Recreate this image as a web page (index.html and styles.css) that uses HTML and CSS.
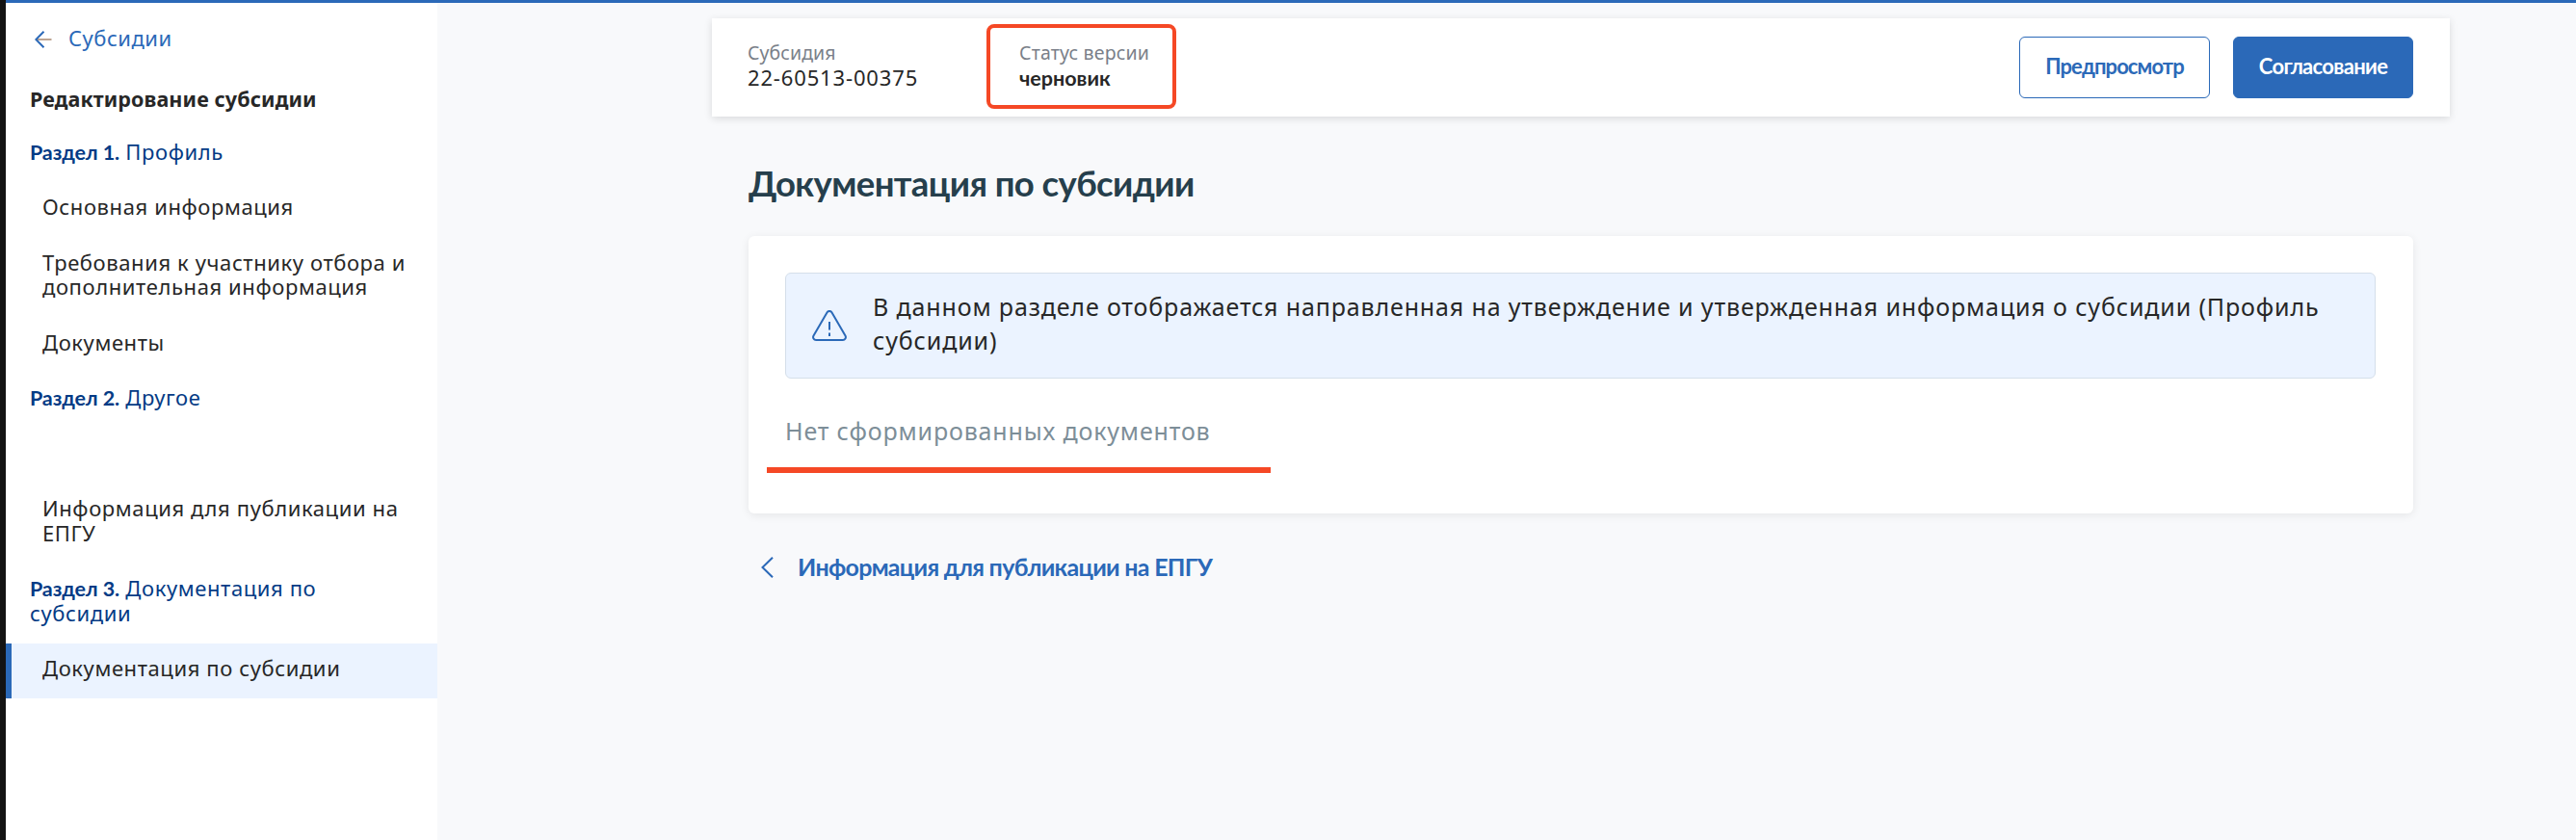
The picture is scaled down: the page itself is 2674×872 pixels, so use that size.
FILE: index.html
```html
<!DOCTYPE html>
<html lang="ru">
<head>
<meta charset="utf-8">
<title>Документация по субсидии</title>
<link rel="stylesheet" href="styles.css">
</head>
<body>
<div class="app">
  <aside class="sidebar">
    <a class="back">
      <svg class="back-icon" width="18" height="18" viewBox="0 0 18 18" fill="none"><path d="M2 9h15.500" stroke="#ae8e78" stroke-width="1.600"/><path d="M9.500 .8 1.300 9l8.200 8.200" stroke="#2b69b8" stroke-width="2"/></svg>
      <span class="back-text">Субсидии</span>
    </a>
    <h2 class="side-title">Редактирование субсидии</h2>
    <nav class="menu">
      <div class="section"><b class="num">Раздел 1.</b> Профиль</div>
      <a class="item">Основная информация</a>
      <a class="item">Требования к участнику отбора и<br>дополнительная информация</a>
      <a class="item">Документы</a>
      <div class="section"><b class="num">Раздел 2.</b> Другое</div>
      <div class="blank"></div>
      <a class="item">Информация для публикации на<br>ЕПГУ</a>
      <div class="section"><b class="num">Раздел 3.</b> Документация по<br>субсидии</div>
      <a class="item active">Документация по субсидии</a>
    </nav>
  </aside>
  <main class="main">
    <header class="topbar">
      <div class="field subsidy"><span class="label">Субсидия</span><span class="number">22-60513-00375</span></div>
      <div class="field status"><span class="label status-label">Статус версии</span><b class="state">черновик</b></div>
      <div class="actions">
        <button class="btn outline">Предпросмотр</button>
        <button class="btn primary">Согласование</button>
      </div>
    </header>
    <div class="content">
      <h1 class="title">Документация по субсидии</h1>
      <section class="card">
        <div class="alert">
          <svg class="alert-icon" width="36" height="33" viewBox="0 0 36 33" fill="none" stroke="#2b69b8" stroke-width="2" stroke-linejoin="round"><path d="M15.600 2.300 1.500 26.500a3 3 0 0 0 2.600 4.500h27.800a3 3 0 0 0 2.600-4.500L20.400 2.300a2.800 2.800 0 0 0-4.800 0Z"/><path d="M18 12v8.500M18 23.500v3.500"/></svg>
          <p class="alert-text">В данном разделе отображается направленная на утверждение и утвержденная информация о субсидии (Профиль<br>субсидии)</p>
        </div>
        <p class="empty">Нет сформированных документов</p>
        <div class="underline"></div>
      </section>
      <a class="prev">
        <svg class="prev-icon" width="13" height="22" viewBox="0 0 13 22" fill="none" stroke="#2b69b8" stroke-width="2"><path d="M12 .7 1.500 11 12 21.300"/></svg>
        <span class="prev-text">Информация для публикации на ЕПГУ</span>
      </a>
    </div>
  </main>
</div>
</body>
</html>
```
FILE: styles.css
```css
* { box-sizing: border-box; }
body {
  margin: 0;
  background: #f8f9fb;
  color: #272727;
  font: 22px/25.5px "Noto Sans", "Liberation Sans", sans-serif;
}
h1, h2, p { margin: 0; }
.app {
  display: flex;
  height: 872px;
  overflow: hidden;
  border-left: 6px solid #131313;
}

/* Sidebar */
.sidebar {
  width: 448px;
  background: #fff;
  border-top: 3px solid #2b69b8;
  letter-spacing: .6px;
}
.back {
  display: flex;
  align-items: center;
  gap: 17px;
  padding: 24px 0 0 30px;
  color: #2b69b8;
}
.back-text { letter-spacing: .5px; }
.back-icon { margin-top: 2px; }
.side-title {
  padding: 37px 0 0 25px;
  font-size: 21.5px;
  line-height: 25.5px;
  letter-spacing: .1px;
}
.menu { padding-top: 16px; }
.section, .item { padding: 13.5px 0 18.5px; white-space: nowrap; }
.section { padding-left: 25px; color: #043b85; }
.num {
  font-family: Lato, sans-serif;
  font-size: 21.5px;
  font-weight: 700;
  line-height: 1;
  letter-spacing: -.12px;
}
.item { display: block; padding-left: 38px; }
.active {
  padding-left: 32px;
  border-left: 6px solid #2b69b8;
  background: #ebf3ff;
}
.blank { height: 57.5px; }

/* Main column */
.main { flex: 1; border-top: 3px solid #2b69b8; }
.topbar {
  display: flex;
  align-items: flex-start;
  width: 1804px;
  height: 102px;
  margin: 16px 0 0 285px;
  padding-right: 38px;
  background: #fff;
  box-shadow: 0 2px 8px rgba(0, 0, 0, .13);
}
.field { display: flex; flex-direction: column; }
.subsidy { width: 285px; padding: 23px 0 0 37px; }
.label { font-size: 19.5px; line-height: 26px; letter-spacing: .08px; color: #7a7f89; }
.number { line-height: 25px; letter-spacing: .85px; }
.status {
  width: 197px;
  height: 88px;
  margin-top: 6px;
  padding: 13px 0 0 30px;
  border: 4px solid #f54825;
  border-radius: 8px;
}
.status-label { letter-spacing: .18px; }
.state {
  font-family: Lato, sans-serif;
  font-size: 21.5px;
  font-weight: 700;
  line-height: 26px;
}
.actions { display: flex; gap: 24px; margin: 19px 0 0 auto; }
.btn {
  height: 64px;
  padding: 0 0 2px;
  border: 1px solid #2b69b8;
  border-radius: 6px;
  font: 700 22px/26px Lato, sans-serif;
}
.outline { width: 198px; background: #fff; color: #2b69b8; letter-spacing: -.9px; }
.primary { width: 187px; background: #2b69b8; color: #fff; letter-spacing: -.68px; }

/* Content */
.content { width: 1728px; margin: 44px 0 0 323px; }
.title {
  font: 700 36.5px/50px Lato, sans-serif;
  letter-spacing: -.6px;
  color: #263f4c;
}
.card {
  height: 288px;
  margin-top: 30px;
  padding: 38px;
  border-radius: 6px;
  background: #fff;
  box-shadow: 0 2px 10px rgba(0, 0, 0, .08);
}
.alert {
  display: flex;
  align-items: center;
  width: 1651px;
  height: 110px;
  padding: 0 0 0 27px;
  border: 1px solid #d5dfea;
  border-radius: 6px;
  background: #ebf3ff;
}
.alert-text {
  margin: -5px 0 0 27px;
  font-size: 25px;
  line-height: 35px;
  letter-spacing: .86px;
  white-space: nowrap;
}
.empty {
  margin-top: 37px;
  font-size: 25px;
  line-height: 35px;
  letter-spacing: .84px;
  color: #7d8e98;
}
.underline { width: 523px; height: 6px; margin: 20px 0 0 -19px; background: #f54825; }
.prev {
  display: flex;
  align-items: center;
  gap: 25px;
  margin: 39px 0 0 13px;
  color: #2b69b8;
}
.prev-text {
  margin-top: -2px;
  font: 700 25px/36px Lato, sans-serif;
  letter-spacing: -.7px;
}
```
